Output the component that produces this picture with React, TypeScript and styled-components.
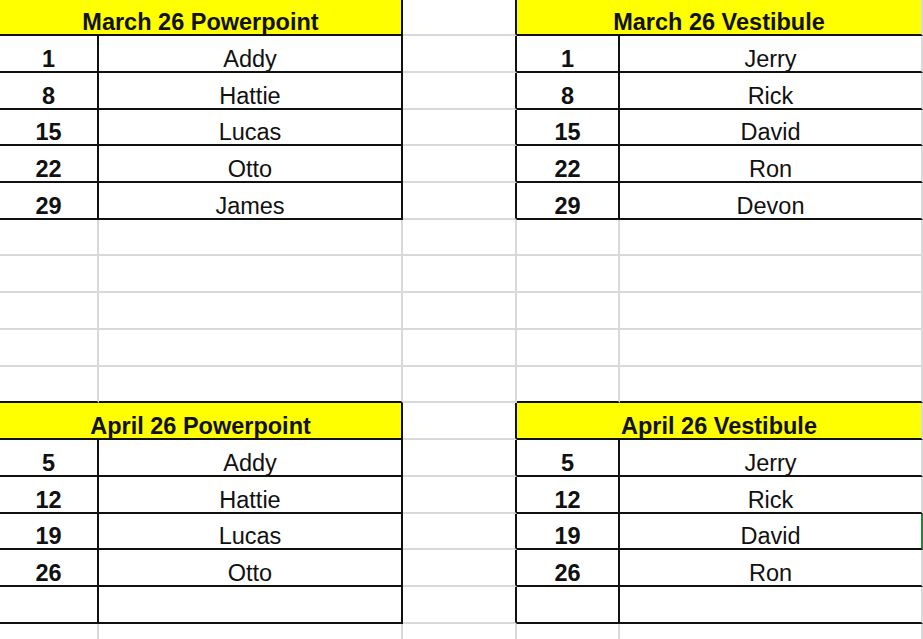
import styled, { createGlobalStyle, css } from "styled-components"

const GlobalStyle = createGlobalStyle`
    html, body {
        margin: 0;
        padding: 0;
        background: #ffffff;
        overflow: hidden;
    }
    * {
        box-sizing: border-box;
    }
`

const GRID = "#d9d9d9"
const INK = "#111111"

const Sheet = styled.div`
    width: 923px;
    height: 639px;
    overflow: hidden;
    display: flex;
    flex-direction: column;
    font-family: "Liberation Sans", Arial, sans-serif;
    color: ${INK};
`

const Row = styled.div<{ $h: number }>`
    display: grid;
    grid-template-columns: 99px 304px 114px 103px 303px 1fr;
    height: ${(p) => p.$h}px;
    flex-shrink: 0;
`

const Cell = styled.div<{
    $span?: number
    $fill?: boolean
    $bold?: boolean
    $bb?: boolean
    $br?: boolean
    $green?: boolean
}>`
    grid-column: span ${(p) => p.$span || 1};
    display: flex;
    align-items: flex-end;
    justify-content: center;
    padding-bottom: 0;
    font-size: 23.5px;
    line-height: 1;
    white-space: nowrap;
    font-weight: ${(p) => (p.$bold ? 700 : 400)};
    background: ${(p) => (p.$fill ? "#ffff00" : "#ffffff")};
    border-bottom: ${(p) => (p.$bb ? `2px solid ${INK}` : `2px solid ${GRID}`)};
    border-right: ${(p) => (p.$br ? `2px solid ${INK}` : `2px solid ${GRID}`)};
    ${(p) =>
        p.$green &&
        css`
            border-right: 2px solid #2f7d45;
        `}
`

type Entry = [number, string, number, string]

type Block = {
    titles: [string, string]
    entries: Entry[]
    boxedBlank?: boolean
}

const blocks: Block[] = [
    {
        titles: ["March 26 Powerpoint", "March 26 Vestibule"],
        entries: [
            [1, "Addy", 1, "Jerry"],
            [8, "Hattie", 8, "Rick"],
            [15, "Lucas", 15, "David"],
            [22, "Otto", 22, "Ron"],
            [29, "James", 29, "Devon"],
        ],
    },
    {
        titles: ["April 26 Powerpoint", "April 26 Vestibule"],
        entries: [
            [5, "Addy", 5, "Jerry"],
            [12, "Hattie", 12, "Rick"],
            [19, "Lucas", 19, "David"],
            [26, "Otto", 26, "Ron"],
        ],
        boxedBlank: true,
    },
]

// row heights as they fall in the screenshot (≈36.75px per row)
const heights = [36, 37, 37, 36, 37, 37, 36, 37, 37, 37, 36, 37, 37, 37, 36, 37, 37, 20]

type RowSpec =
    | { kind: "header"; titles: [string, string] }
    | { kind: "data"; entry: Entry }
    | { kind: "boxed" }
    | { kind: "blank"; closes: boolean }

const buildRows = (): RowSpec[] => {
    const rows: RowSpec[] = []
    blocks.forEach((b, i) => {
        rows.push({ kind: "header", titles: b.titles })
        b.entries.forEach((entry) => rows.push({ kind: "data", entry }))
        if (b.boxedBlank) rows.push({ kind: "boxed" })
        if (i === 0) {
            for (let n = 0; n < 5; n++) rows.push({ kind: "blank", closes: n === 4 })
        }
    })
    rows.push({ kind: "blank", closes: false })
    return rows
}

const SheetRow = ({ spec, h }: { spec: RowSpec; h: number }) => {
    if (spec.kind === "header") {
        return (
            <Row $h={h}>
                <Cell $span={2} $fill $bold $bb $br>
                    {spec.titles[0]}
                </Cell>
                <Cell $br />
                <Cell $span={2} $fill $bold $bb>
                    {spec.titles[1]}
                </Cell>
                <Cell />
            </Row>
        )
    }
    if (spec.kind === "data" || spec.kind === "boxed") {
        const e = spec.kind === "data" ? spec.entry : null
        return (
            <Row $h={h}>
                <Cell $bold $bb $br>{e?.[0]}</Cell>
                <Cell $bb $br>{e?.[1]}</Cell>
                <Cell $br />
                <Cell $bold $bb $br>{e?.[2]}</Cell>
                <Cell $bb $green={e?.[3] === "David" && e?.[2] === 19}>{e?.[3]}</Cell>
                <Cell />
            </Row>
        )
    }
    return (
        <Row $h={h}>
            <Cell $bb={spec.closes} />
            <Cell $bb={spec.closes} />
            <Cell />
            <Cell $bb={spec.closes} />
            <Cell $bb={spec.closes} />
            <Cell />
        </Row>
    )
}

const App = () => {
    const rows = buildRows()
    return (
        <>
            <GlobalStyle />
            <Sheet>
                {rows.map((spec, i) => (
                    <SheetRow key={i} spec={spec} h={heights[i] ?? 37} />
                ))}
            </Sheet>
        </>
    )
}

export default App
